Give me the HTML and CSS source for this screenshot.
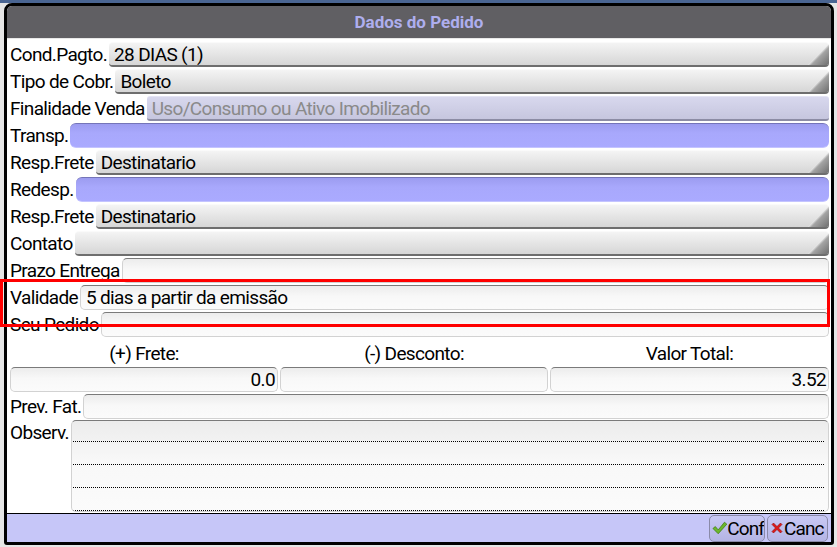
FILE: index.html
```html
<!doctype html>
<html>
<head>
	<meta charset="utf-8">
	<link rel="stylesheet" href="styles.css">
</head>
<body>

<div class="desk-top"></div>

<div class="dialog">
	<div class="dialog-title">Dados do Pedido</div>

	<div class="form">
		<div class="row">
			<label class="lbl">Cond.Pagto.</label>
			<div class="field combo">28 DIAS (1)</div>
		</div>
		<div class="row">
			<label class="lbl">Tipo de Cobr.</label>
			<div class="field combo">Boleto</div>
		</div>
		<div class="row">
			<label class="lbl">Finalidade Venda</label>
			<div class="field locked">Uso/Consumo ou Ativo Imobilizado</div>
		</div>
		<div class="row">
			<label class="lbl">Transp.</label>
			<div class="field lookup"></div>
		</div>
		<div class="row">
			<label class="lbl">Resp.Frete</label>
			<div class="field combo">Destinatario</div>
		</div>
		<div class="row">
			<label class="lbl">Redesp.</label>
			<div class="field lookup"></div>
		</div>
		<div class="row">
			<label class="lbl">Resp.Frete</label>
			<div class="field combo">Destinatario</div>
		</div>
		<div class="row">
			<label class="lbl">Contato</label>
			<div class="field combo"></div>
		</div>
		<div class="row">
			<label class="lbl">Prazo Entrega</label>
			<div class="field edit"></div>
		</div>
		<div class="row">
			<label class="lbl">Validade</label>
			<div class="field edit">5 dias a partir da emissão</div>
		</div>
		<div class="row">
			<label class="lbl">Seu Pedido</label>
			<div class="field edit"></div>
		</div>

		<div class="totals-head">
			<span>(+) Frete:</span>
			<span>(-) Desconto:</span>
			<span>Valor Total:</span>
		</div>
		<div class="totals">
			<div class="field edit num">0.0</div>
			<div class="field edit num"></div>
			<div class="field edit num">3.52</div>
		</div>

		<div class="row prev">
			<label class="lbl">Prev. Fat.</label>
			<div class="field edit"></div>
		</div>
		<div class="row obs">
			<label class="lbl">Observ.</label>
			<div class="field edit memo">
				<div class="memo-line"></div>
				<div class="memo-line"></div>
				<div class="memo-line"></div>
				<div class="memo-line"></div>
			</div>
		</div>
	</div>

	<div class="bottom-bar">
		<button class="btn btn-ok">
			<svg width="16" height="14" viewBox="0 0 16 14"><path d="M1 7.5 L3.5 5.5 L6.5 9 L13 1 L15.5 3 L6.5 13 Z" fill="#6cb82c" stroke="#3f7a12" stroke-width="0.8"/></svg>Conf
		</button>
		<button class="btn btn-cancel">
			<svg width="14" height="14" viewBox="0 0 14 14"><path d="M2 3.5 L3.5 2 L7 5.5 L10.5 2 L12 3.5 L8.5 7 L12 10.5 L10.5 12 L7 8.5 L3.5 12 L2 10.5 L5.5 7 Z" fill="#e01818" stroke="#8a0c0c" stroke-width="0.6"/></svg>Canc
		</button>
	</div>
</div>

<div class="highlight"></div>

</body>
</html>
```

FILE: styles.css
```css
body {
    margin: 0;
    background: #e6e6e6;
    font-family: Roboto, "Liberation Sans", sans-serif;
    font-size: 19px;
    letter-spacing: -0.65px;
    color: #000;
    position: relative;
    height: 547px;
    overflow: hidden;
}

.desk-top {
    height: 3px;
    background: #4a6592;
}

.dialog {
    margin: 0 3px 0 4px;
    height: 542px;
    box-sizing: border-box;
    border: 3px solid #000;
    border-radius: 8px 8px 3px 3px;
    background: #fff;
    display: flex;
    flex-direction: column;
    overflow: hidden;
}

.dialog-title {
    height: 32px;
    line-height: 32px;
    flex: none;
    background: #605f63;
    border-bottom: 1px solid #e8e8e8;
    color: #aeaeee;
    font-weight: bold;
    font-size: 17px;
    letter-spacing: 0;
    text-align: center;
}

.form {
    padding: 3px 2px 0 3px;
    flex: 1;
}

.row {
    display: flex;
    align-items: center;
    height: 25px;
    margin-bottom: 2px;
}

.lbl {
    white-space: nowrap;
    margin-right: 2px;
}

.field {
    flex: 1;
    height: 25px;
    box-sizing: border-box;
    padding: 0 5px;
    line-height: 24px;
    white-space: nowrap;
    overflow: hidden;
    position: relative;
}

.combo {
    background: linear-gradient(#f4f4f4, #e2e2e2 60%, #d6d6d6);
    border-top: 1px solid #fafafa;
    border-bottom: 2px solid #6e6e6e;
    border-radius: 4px;
}

.combo::after {
    content: "";
    position: absolute;
    right: 0;
    bottom: 0;
    width: 21px;
    height: 21px;
    background: linear-gradient(135deg, #e4e4e4 50%, #a4a4a4 58%, #6e6e6e);
    clip-path: polygon(100% 0, 100% 100%, 0 100%);
}

.locked {
    background: linear-gradient(#d8d8ee, #c6c6de);
    border-top: 1px solid #e4e4f4;
    border-bottom: 2px solid #8c8ca4;
    border-radius: 3px;
    color: #8a8a8a;
}

.lookup {
    background: linear-gradient(#9c9cf0, #a8a8fc 40%, #aaaaff);
    border-top: 1px solid #7474b8;
    border-bottom: 1px solid #c4c4ff;
    border-radius: 6px;
}

.edit {
    background: linear-gradient(#ececec, #f8f8f8 45%, #fbfbfb);
    border: 1px solid #d2d2d2;
    border-top: 1px solid #7a7a7a;
    border-radius: 5px;
}

.totals-head {
    display: grid;
    grid-template-columns: 268px 268px 1fr;
    column-gap: 2px;
    height: 27px;
    line-height: 30px;
    text-align: center;
}

.totals {
    display: grid;
    grid-template-columns: 268px 268px 1fr;
    column-gap: 2px;
    margin-top: 1px;
    margin-bottom: 2px;
}

.num {
    text-align: right;
    padding-right: 2px;
}

.prev {
    margin-bottom: 1px;
}

.obs {
    height: 92px;
    align-items: flex-start;
    margin-bottom: 0;
}

.obs .lbl {
    line-height: 26px;
}

.memo {
    height: 92px;
    padding: 0 4px 0 1px;
}

.memo-line {
    height: 22px;
    border-bottom: 1px dotted #000;
}

.memo-line:first-child {
    height: 20px;
}

.bottom-bar {
    height: 28px;
    flex: none;
    border-top: 1px solid #000;
    background: #c6c6f8;
    display: flex;
    justify-content: flex-end;
    align-items: center;
    gap: 2px;
    padding-right: 3px;
}

.btn {
    height: 27px;
    box-sizing: border-box;
    display: flex;
    align-items: center;
    padding: 0 0 0 2px;
    border: 1px solid #8a8aa8;
    border-radius: 5px;
    background: linear-gradient(#c8c8f4, #b4b4e4);
    font-family: Roboto, "Liberation Sans", sans-serif;
    font-size: 19px;
    letter-spacing: -0.9px;
    color: #000;
    overflow: hidden;
}

.btn-ok {
    width: 56px;
}

.btn-cancel {
    width: 61px;
}

.highlight {
    position: absolute;
    left: 0;
    top: 279px;
    width: 830px;
    height: 48px;
    box-sizing: border-box;
    border: 3px solid #ff0000;
}
```
